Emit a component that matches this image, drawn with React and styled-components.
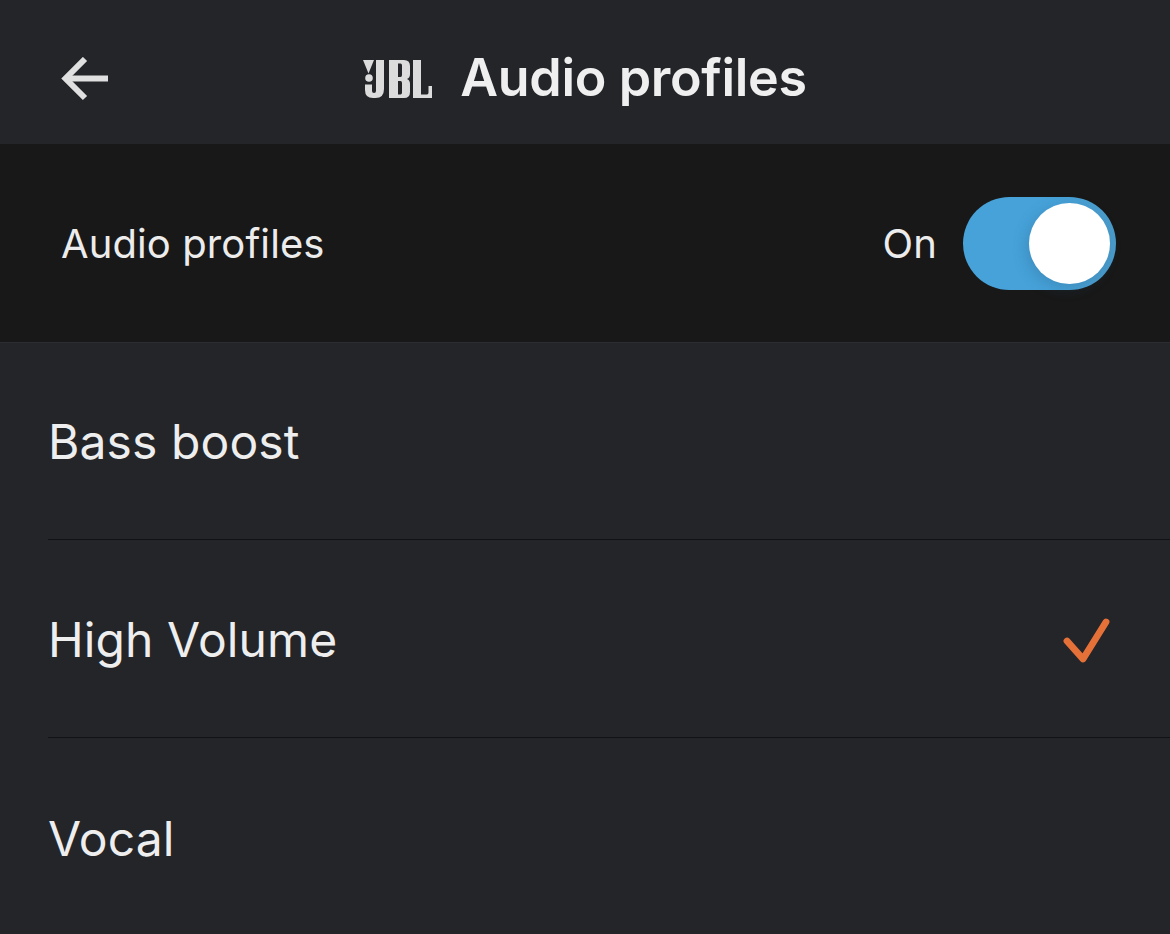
import React from "react";
import styled, { createGlobalStyle } from "styled-components";

const Global = createGlobalStyle`
  html, body { margin: 0; padding: 0; background: #232529; }
  body { font-family: Inter, "Liberation Sans", sans-serif; }
`;

const Page = styled.div`
  width: 1170px;
  height: 934px;
  overflow: hidden;
  background: #232529;
  color: #ececec;
`;

const Header = styled.header`
  height: 144px;
  display: grid;
  grid-template-columns: 1fr auto 1fr;
  align-items: center;
  padding-left: 59px;
  padding-right: 59px;
  box-sizing: border-box;
`;

const BackIcon = styled.svg`
  width: 52px;
  height: 48px;
  display: block;
  margin-top: 18px;
`;

const TitleGroup = styled.div`
  display: flex;
  align-items: center;
  gap: 28px;
  margin-top: 12px;
`;

const Logo = styled.svg`
  width: 69px;
  height: 38px;
  display: block;
  margin-top: 1px;
`;

const Title = styled.h1`
  margin: 0;
  font-size: 52px;
  font-weight: 600;
  letter-spacing: -0.35px;
  line-height: 60px;
  color: #efefef;
`;

const ToggleBand = styled.section`
  height: 199px;
  box-sizing: border-box;
  background: #181818;
  border-bottom: 1px solid #2b2d30;
  display: flex;
  align-items: center;
  justify-content: space-between;
  padding: 0 54px 0 61px;
`;

const BandLabel = styled.span`
  font-size: 40px;
  font-weight: 400;
  letter-spacing: 0.1px;
  color: #ececec;
`;

const BandControl = styled.div`
  display: flex;
  align-items: center;
  gap: 26px;
`;

const Toggle = styled.div`
  position: relative;
  width: 153px;
  height: 93px;
  border-radius: 47px;
  background: linear-gradient(90deg, #46a2d9 0%, #46a2d9 60%, #4a9bca 100%);
`;

const Knob = styled.div`
  position: absolute;
  top: 6px;
  right: 6px;
  width: 81px;
  height: 81px;
  border-radius: 50%;
  background: #fff;
  box-shadow: -3px 4px 14px rgba(40, 90, 125, 0.28);
`;

const Row = styled.div`
  height: 198px;
  box-sizing: border-box;
  margin-left: 48px;
  margin-top: ${(p) => (p.$first ? "-1px" : "0")};
  padding: 2px 56px 0 0;
  display: flex;
  align-items: center;
  justify-content: space-between;
  border-bottom: ${(p) => (p.$last ? "none" : "1px solid #111214")};
`;

const RowLabel = styled.span`
  font-size: 48px;
  font-weight: 400;
  letter-spacing: 0.1px;
  color: #eeeeee;
`;

const Check = styled.svg`
  width: 52px;
  height: 50px;
  display: block;
`;

const rows = [
  { name: "Bass boost" },
  { name: "High Volume", selected: true },
  { name: "Vocal" },
];

export default function App() {
  return (
    <Page>
      <Global />
      <Header>
        <BackIcon viewBox="0 0 52 48" fill="none" stroke="#e0e0e0" strokeWidth="6">
          <path d="M6 21.5H49" />
          <path d="M26 2L6.500 21.500L26 41" strokeLinejoin="miter" />
        </BackIcon>
        <TitleGroup>
          <Logo viewBox="0 0 69 38" fill="#dcdcdc">
            <path d="M0 0H11L5.5 13.5Z" />
            <circle cx="6" cy="18" r="3.8" />
            <path d="M13 0H21V29Q21 38 12.500 38H10Q2 38 2 30V24.500H9V31Q9 33 11 33Q13 33 13 31Z" />
            <path
              fillRule="evenodd"
              d="M26 0H41Q47 0 47 6V14Q47 18 44 19Q47 20 47 24V32Q47 38 41 38H26ZM35 3.500V17H37.500Q39 17 39 15V5.500Q39 3.500 37.500 3.500ZM35 21V34.500H37.500Q39 34.500 39 32.500V23Q39 21 37.500 21Z"
            />
            <path d="M50 0H58V34.500H64Q65.500 34.500 65.500 32.500V26H69V38H50Z" />
          </Logo>
          <Title>Audio profiles</Title>
        </TitleGroup>
      </Header>
      <ToggleBand>
        <BandLabel>Audio profiles</BandLabel>
        <BandControl>
          <BandLabel>On</BandLabel>
          <Toggle>
            <Knob />
          </Toggle>
        </BandControl>
      </ToggleBand>
      {rows.map((r, i) => (
        <Row key={r.name} $first={i === 0} $last={i === rows.length - 1}>
          <RowLabel>{r.name}</RowLabel>
          {r.selected && (
            <Check viewBox="0 0 52 50" fill="none" stroke="#e67138" strokeWidth="6.8" strokeLinecap="round" strokeLinejoin="round">
              <path d="M5 26L21 44L44 7" />
            </Check>
          )}
        </Row>
      ))}
    </Page>
  );
}
